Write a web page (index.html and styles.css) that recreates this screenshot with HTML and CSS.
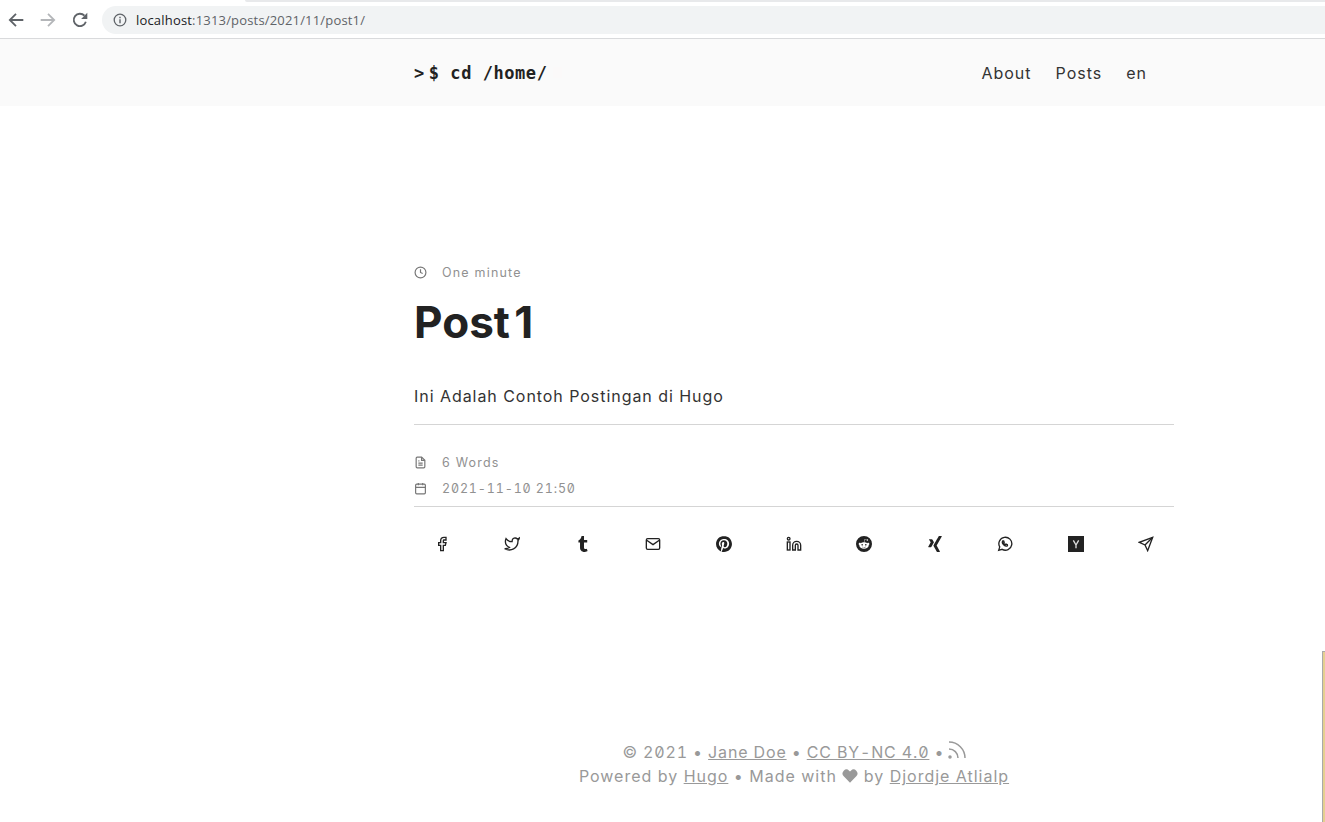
FILE: index.html
```html
<!DOCTYPE html>
<html lang="en">

<head>
    <meta charset="UTF-8">
    <title>Post 1</title>
    <link rel="stylesheet" href="styles.css">
</head>

<body>
    <div class="tab-edge"></div>
    <div class="toolbar">
        <svg class="nav-icon" viewBox="0 0 16 16"><path d="M14.500 8H2.500M8 2.500L2.500 8L8 13.500" fill="none" stroke="#5f6368" stroke-width="1.600"/></svg>
        <svg class="nav-icon" viewBox="0 0 16 16"><path d="M1.500 8H13.500M8 2.500L13.500 8L8 13.500" fill="none" stroke="#b4b6b9" stroke-width="1.600"/></svg>
        <svg class="nav-icon" viewBox="0 0 16 16"><path d="M13.200 9.600A5.500 5.500 0 1 1 12 4.200" fill="none" stroke="#5f6368" stroke-width="1.600"/><path d="M14.500 1.500V7H9z" fill="#5f6368"/></svg>
        <div class="address">
            <svg class="info-icon" viewBox="0 0 14 14"><circle cx="7" cy="7" r="5.800" fill="none" stroke="#5f6368" stroke-width="1.300"/><path d="M7 6.200V10.200M7 3.800V5.200" stroke="#5f6368" stroke-width="1.400"/></svg>
            <span class="host">localhost</span><span class="url-rest">:1313/posts/2021/11/post1/</span>
        </div>
    </div>

    <header class="site-header">
        <div class="header-inner">
            <a class="logo"><span class="logo-arrow">&gt;</span>$ cd /home/<span class="logo-cursor"></span></a>
            <nav class="menu">
                <a>About</a>
                <a>Posts</a>
                <a>en</a>
            </nav>
        </div>
    </header>

    <main class="post">
        <div class="meta-line reading">
            <svg class="meta-icon" viewBox="0 0 24 24"><circle cx="12" cy="12" r="10"/><path d="M12 6v6l4 2"/></svg>
            <span>One minute</span>
        </div>
        <h1 class="post-title">Post 1</h1>
        <p class="post-content">Ini Adalah Contoh Postingan di Hugo</p>
        <div class="post-info">
            <div class="meta-line words">
                <svg class="meta-icon" viewBox="0 0 24 24"><path d="M14 2H6a2 2 0 0 0-2 2v16a2 2 0 0 0 2 2h12a2 2 0 0 0 2-2V8z"/><path d="M14 2v6h6M16 13H8M16 17H8M10 9H8"/></svg>
                <span>6 Words</span>
            </div>
            <div class="meta-line date">
                <svg class="meta-icon" viewBox="0 0 24 24"><rect x="3" y="4" width="18" height="18" rx="2"/><path d="M16 2v4M8 2v4M3 10h18"/></svg>
                <span>2021-11-10 21:50</span>
            </div>
        </div>
        <div class="share">
            <svg viewBox="0 0 24 24"><path d="M18 2h-3a5 5 0 0 0-5 5v3H7v4h3v8h4v-8h3l1-4h-4V7a1 1 0 0 1 1-1h3z"/></svg>
            <svg viewBox="0 0 24 24"><path d="M23 3a10.900 10.900 0 0 1-3 1.530 4.480 4.480 0 0 0-7.860 3v1A10.660 10.660 0 0 1 3 4s-4 9 5 13a11.640 11.640 0 0 1-7 2c9 5 20 0 20-11.500a4.500 4.500 0 0 0-.08-.83A7.720 7.720 0 0 0 23 3z"/></svg>
            <svg viewBox="0 0 24 24"><path class="solid" d="M14.563 24c-5.093 0-7.031-3.756-7.031-6.411V9.747H5.116V6.648c3.63-1.313 4.512-4.596 4.71-6.469C9.84.051 9.941 0 9.999 0h3.517v6.114h4.801v3.633h-4.82v7.47c.016 1.001.375 2.371 2.207 2.371h.09c.631-.02 1.486-.205 1.936-.419l1.156 3.425c-.436.636-2.4 1.374-4.156 1.404h-.178l.011.002z"/></svg>
            <svg viewBox="0 0 24 24"><path d="M4 4h16c1.100 0 2 .9 2 2v12c0 1.100-.9 2-2 2H4c-1.100 0-2-.9-2-2V6c0-1.100.9-2 2-2z"/><path d="M22 6l-10 7L2 6"/></svg>
            <svg viewBox="0 0 24 24"><path class="solid" d="M12.017 0C5.396 0 .029 5.367.029 11.987c0 5.079 3.158 9.417 7.618 11.162-.105-.949-.199-2.403.041-3.439.219-.937 1.406-5.957 1.406-5.957s-.359-.72-.359-1.781c0-1.663.967-2.911 2.168-2.911 1.024 0 1.518.769 1.518 1.688 0 1.029-.653 2.567-.992 3.992-.285 1.193.6 2.165 1.775 2.165 2.128 0 3.768-2.245 3.768-5.487 0-2.861-2.063-4.869-5.008-4.869-3.41 0-5.409 2.562-5.409 5.199 0 1.033.394 2.143.889 2.741.099.12.112.225.085.345-.09.375-.293 1.199-.334 1.363-.053.225-.172.271-.401.165-1.495-.69-2.433-2.878-2.433-4.646 0-3.776 2.748-7.252 7.92-7.252 4.158 0 7.392 2.967 7.392 6.923 0 4.135-2.607 7.462-6.233 7.462-1.214 0-2.354-.629-2.758-1.379l-.749 2.848c-.269 1.045-1.004 2.352-1.498 3.146 1.123.345 2.306.535 3.55.535 6.607 0 11.985-5.365 11.985-11.987C23.97 5.39 18.592.026 11.985.026L12.017 0z"/></svg>
            <svg viewBox="0 0 24 24"><path d="M16 8a6 6 0 0 1 6 6v7h-4v-7a2 2 0 0 0-4 0v7h-4v-7a6 6 0 0 1 6-6z"/><rect x="2" y="9" width="4" height="12"/><circle cx="4" cy="4" r="2"/></svg>
            <svg viewBox="0 0 24 24"><path class="solid" d="M12 0A12 12 0 0 0 0 12a12 12 0 0 0 12 12 12 12 0 0 0 12-12A12 12 0 0 0 12 0zm5.010 4.744c.688 0 1.250.561 1.250 1.249a1.250 1.250 0 0 1-2.498.056l-2.597-.547-.8 3.747c1.824.07 3.480.632 4.674 1.488.308-.309.730-.491 1.207-.491.968 0 1.754.786 1.754 1.754 0 .716-.435 1.333-1.010 1.614a3.111 3.111 0 0 1 .042.520c0 2.694-3.130 4.870-7.004 4.870-3.874 0-7.004-2.176-7.004-4.870 0-.183.015-.366.043-.534A1.748 1.748 0 0 1 4.028 12c0-.968.786-1.754 1.754-1.754.463 0 .898.196 1.207.490 1.207-.883 2.878-1.430 4.744-1.487l.885-4.182a.342.342 0 0 1 .14-.197.350.350 0 0 1 .238-.042l2.906.617a1.214 1.214 0 0 1 1.108-.701zM9.250 12C8.561 12 8 12.562 8 13.250c0 .687.561 1.248 1.250 1.248.687 0 1.248-.561 1.248-1.249 0-.688-.561-1.249-1.249-1.249zm5.500 0c-.687 0-1.248.561-1.248 1.250 0 .687.561 1.248 1.249 1.248.688 0 1.249-.561 1.249-1.249 0-.687-.562-1.249-1.250-1.249zm-5.466 3.990a.327.327 0 0 0-.231.094.330.330 0 0 0 0 .463c.842.842 2.484.913 2.961.913.477 0 2.105-.056 2.961-.913a.361.361 0 0 0 .029-.463.330.330 0 0 0-.464 0c-.547.533-1.684.730-2.512.730-.828 0-1.979-.196-2.512-.730a.326.326 0 0 0-.232-.095z"/></svg>
            <svg viewBox="0 0 24 24"><path class="solid" d="M18.188 0c-.517 0-.741.325-.927.66 0 0-7.455 13.224-7.702 13.657.015.024 4.919 9.023 4.919 9.023.17.308.436.66.967.66h3.454c.211 0 .375-.078.463-.22.089-.151.089-.346-.009-.536l-4.879-8.916c-.004-.006-.004-.016 0-.022L22.139.756c.095-.191.097-.387.006-.535C22.056.078 21.894 0 21.686 0h-3.498zM3.648 4.740c-.211 0-.385.074-.473.216-.09.149-.078.339.02.531l2.340 4.050c.004.01.004.016 0 .021L1.860 16.051c-.099.188-.093.381 0 .529.085.142.239.234.450.234h3.461c.518 0 .766-.348.945-.667l3.734-6.609-2.378-4.155c-.172-.315-.434-.659-.962-.659H3.648v.016z"/></svg>
            <svg viewBox="0 0 24 24"><path d="M2.500 21.500l1.600-5.100A9.700 9.700 0 1 1 7.700 20z"/><path d="M8.500 7.500c-1 1.500-.5 3.500 1.500 5.500s4.200 2.800 5.700 1.600l-.2-1.600-2-.8-1 .9c-1-.4-2.200-1.600-2.600-2.700l.9-.9-.8-2z"/></svg>
            <svg viewBox="0 0 24 24"><rect class="solid" width="24" height="24"/><path class="cut" d="M8 6.500l4 7 4-7M12 13.500v5"/></svg>
            <svg viewBox="0 0 24 24"><path d="M22 2L2 9.500l8.500 4L14.500 22z"/><path d="M22 2L10.500 13.500"/></svg>
        </div>
    </main>

    <footer class="site-footer">
        <div class="copyright">&copy; 2021 &bull; <a>Jane Doe</a> &bull; <a>CC BY-NC 4.0</a> &bull; <svg class="rss-icon" viewBox="0 0 24 24"><path d="M4 11a9 9 0 0 1 9 9M4 4a16 16 0 0 1 16 16"/><circle cx="5" cy="19" r="1"/></svg></div>
        <div class="powered">Powered by <a>Hugo</a> &bull; Made with <svg class="heart-icon" viewBox="0 0 24 24"><path d="M12 22L2.600 12.300a6 6 0 0 1 0-8.300 5.700 5.700 0 0 1 8.100 0L12 5.300 13.300 4a5.700 5.700 0 0 1 8.100 0 6 6 0 0 1 0 8.300z"/></svg> by <a>Djordje Atlialp</a></div>
    </footer>

    <div class="side-sliver"></div>
</body>

</html>
```

FILE: styles.css
```css
html, body {
    margin: 0;
    padding: 0;
}

body {
    position: relative;
    height: 822px;
    overflow: hidden;
    background-color: #fff;
    font-family: "Inter", "Liberation Sans", sans-serif;
    color: #222;
}

a {
    color: inherit;
}

/* browser chrome */
.tab-edge {
    height: 2px;
    margin-left: 245px;
    background-color: #e8e9eb;
    border-bottom-left-radius: 4px;
}

.toolbar {
    display: flex;
    align-items: center;
    height: 36px;
    border-bottom: 1px solid #d9dadc;
}

.nav-icon {
    width: 18px;
    height: 18px;
    margin: 0 7px;
}

.address {
    display: flex;
    align-items: center;
    flex: 1;
    height: 28px;
    margin-left: 6px;
    padding-left: 11px;
    border-radius: 14px 0 0 14px;
    background-color: #f1f3f4;
    font-family: "Open Sans", "Liberation Sans", sans-serif;
    font-size: 13px;
    letter-spacing: .18px;
}

.info-icon {
    width: 14px;
    height: 14px;
    margin-right: 9px;
}

.host {
    color: #202124;
}

.url-rest {
    color: #5f6368;
}

/* header */
.site-header {
    height: 67px;
    background-color: #fafafa;
}

.header-inner {
    display: flex;
    align-items: center;
    justify-content: space-between;
    height: 67px;
    margin-left: 414px;
    width: 733px;
}

.logo {
    display: flex;
    align-items: center;
    font-family: "DejaVu Sans Mono", "Liberation Mono", monospace;
    font-size: 17px;
    font-weight: bold;
    letter-spacing: .55px;
    white-space: pre;
    color: #222;
}

.logo-arrow {
    margin-right: 4px;
}

.logo-cursor {
    width: 9px;
    height: 11px;
    margin-left: 6px;
    background-color: #fbf9f9;
}

.menu {
    display: flex;
    gap: 24px;
    font-size: 16px;
    letter-spacing: 1px;
    color: #333;
}

/* post */
.post {
    width: 760px;
    margin-left: 414px;
    padding-top: 159px;
}

.meta-line {
    display: flex;
    align-items: center;
    font-size: 12.5px;
    letter-spacing: 1.2px;
    color: #919191;
}

.meta-icon {
    width: 13px;
    height: 13px;
    margin-right: 15px;
    fill: none;
    stroke: #777;
    stroke-width: 2.2;
}

.post-title {
    margin: 14px 0 0;
    font-size: 44px;
    line-height: 56px;
    font-weight: 700;
    color: #222;
    word-spacing: -6px;
}

.post-content {
    margin: 34px 0 0;
    padding-bottom: 16px;
    font-size: 16px;
    line-height: 24px;
    letter-spacing: .95px;
    color: #333;
    border-bottom: 1px solid #d5d5d5;
}

.post-info {
    padding: 24px 0 5px;
    border-bottom: 1px solid #d5d5d5;
}

.post-info .meta-line {
    height: 26px;
}

.date {
    font-variant-numeric: tabular-nums slashed-zero;
    letter-spacing: .85px;
}

.share {
    display: flex;
    justify-content: space-between;
    padding: 29px 20px 0;
}

.share svg {
    width: 16px;
    height: 16px;
    fill: none;
    stroke: #222;
    stroke-width: 2;
}

.share .solid {
    fill: #222;
    stroke: none;
}

.share .cut {
    fill: none;
    stroke: #ddd;
    stroke-width: 2;
}

/* footer */
.site-footer {
    width: 760px;
    margin-left: 414px;
    margin-top: 188px;
    text-align: center;
    font-size: 16px;
    line-height: 24px;
    letter-spacing: .98px;
    color: #999;
}

.site-footer a {
    text-decoration: underline;
}

.copyright {
    font-variant-numeric: tabular-nums slashed-zero;
    letter-spacing: .85px;
}

.rss-icon {
    width: 24px;
    height: 24px;
    margin: -4px -3px 0 -5px;
    vertical-align: -4px;
    fill: none;
    stroke: #999;
    stroke-width: 1.5;
}

.heart-icon {
    width: 16px;
    height: 16px;
    vertical-align: -2px;
    fill: #999;
}

/* window peeking in at the right edge */
.side-sliver {
    position: absolute;
    right: 0;
    top: 651px;
    bottom: 0;
    width: 3px;
    background-color: #e5cf90;
    border-left: 1px solid #aaa;
    border-top: 1px solid #aaa;
    box-sizing: border-box;
}
```
